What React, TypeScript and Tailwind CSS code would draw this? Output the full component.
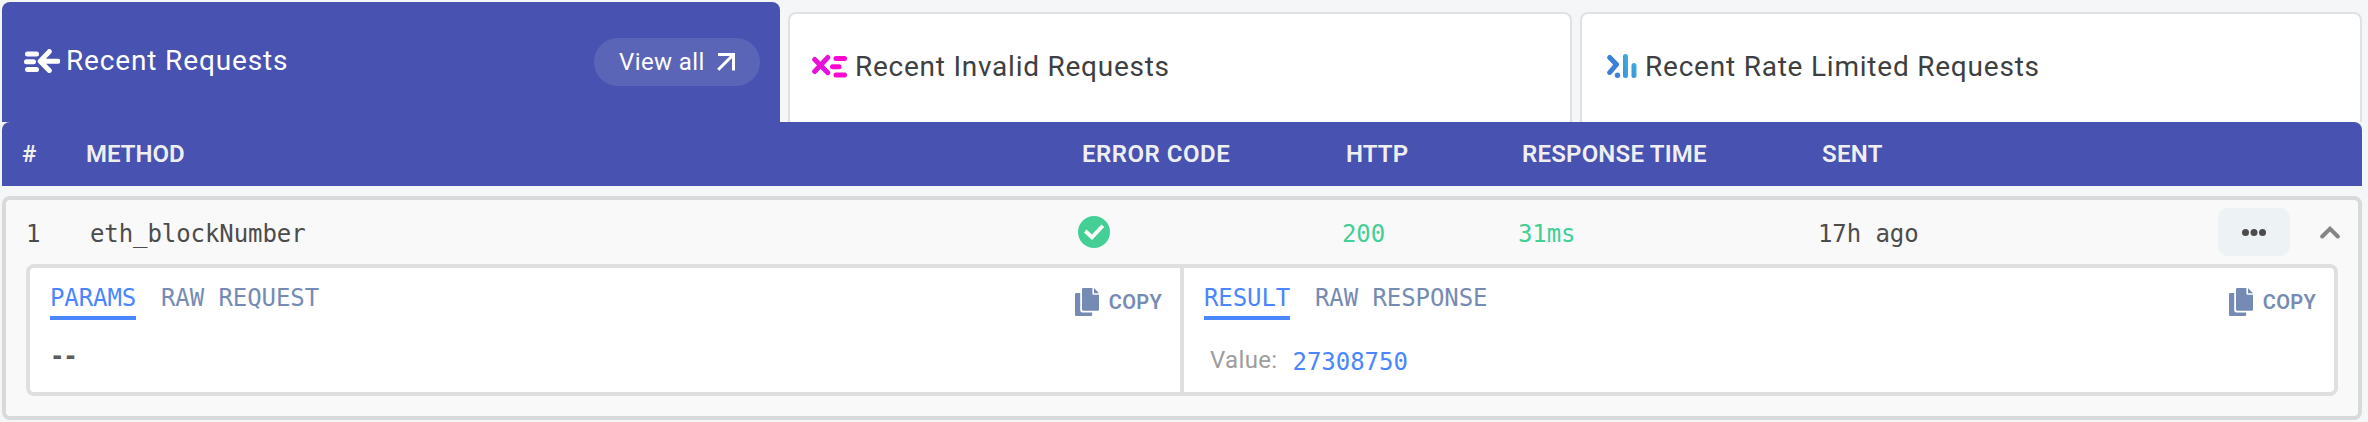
import React from "react";

function RequestsIcon() {
  return (
    <svg className="h-6 w-9 shrink-0" viewBox="0 0 36 24" fill="none" stroke="#fff" strokeWidth="5" strokeLinecap="round" strokeLinejoin="round">
      <path d="M3.5 5H12.5M2.5 12.8H9.5M3.5 20.5H12.5" />
      <path d="M25.3 2.6L16.2 12.2L25.3 21.5M18 12.2H34" />
    </svg>
  );
}

function InvalidIcon() {
  return (
    <svg className="h-6 w-9 shrink-0" viewBox="0 0 36 24" fill="none" strokeWidth="5" strokeLinecap="round">
      <path d="M2.7 5.5L15.8 18.7M15.8 3.5L2.7 17.5" stroke="#e612da" />
      <path d="M24 4.5H32.5M20.5 12.8H27M24 21H32.5" stroke="#fb08d0" />
    </svg>
  );
}

function RateIcon() {
  return (
    <svg className="h-6 w-[30px] shrink-0" viewBox="0 0 30 24" fill="none" strokeWidth="5" strokeLinecap="round" strokeLinejoin="round">
      <defs>
        <linearGradient id="rate-bars" x1="0" y1="1" x2="1" y2="0" gradientUnits="objectBoundingBox">
          <stop offset="0" stopColor="#3c8fdc" />
          <stop offset="1" stopColor="#3bb4dc" />
        </linearGradient>
      </defs>
      <path d="M2.7 3.5L9.5 10.5L2.7 18.5" stroke="#3b7fdb" />
      <circle cx="10.5" cy="21.2" r="2.7" fill="#3b82db" />
      <rect x="16" y="0" width="5" height="24" rx="2.5" fill="url(#rate-bars)" />
      <rect x="24.5" y="9" width="5" height="15" rx="2.5" fill="url(#rate-bars)" />
    </svg>
  );
}

function CopyButton() {
  return (
    <button className="mt-[5px] flex h-7 items-center gap-[10px] text-[20px] font-semibold leading-7 text-[#768bb3]">
      <svg className="h-7 w-6" viewBox="0 0 24 28" fill="currentColor">
        <path d="M1.2 5H5.2V22.2Q5.2 24.6 7.6 24.6H17.2V26.8Q17.2 28 16 28H1.2Q0 28 0 26.8V6.2Q0 5 1.2 5Z" />
        <path d="M8.2 0H17.4V5.6Q17.4 6.8 18.6 6.8H24V21.6Q24 22.8 22.8 22.8H8.2Q7 22.8 7 21.6V1.2Q7 0 8.2 0Z" />
        <path d="M19 0L24 5.2H19Z" />
      </svg>
      <span className="tracking-[0.3px]">COPY</span>
    </button>
  );
}

function Tabs({ active, other }: { active: string; other: string }) {
  return (
    <div className="flex gap-[25px] font-['DejaVu_Sans_Mono',monospace] text-[24px] leading-8 tracking-[-0.08px]">
      <span className="h-[42px] w-[86px] whitespace-nowrap border-b-4 border-[#4a86ff] pt-1 text-[#4a86ff]">{active}</span>
      <span className="pt-1 text-[#768bb3]">{other}</span>
    </div>
  );
}

export default function App() {
  return (
    <div className="h-[422px] w-[2368px] overflow-hidden bg-[#f4f6f8] pl-0.5 pr-1.5 pt-0.5 font-['Roboto',sans-serif]">
      <div className="flex h-[120px] items-end gap-2">
        <div className="flex h-[120px] w-[778px] items-start justify-between rounded-t-lg bg-[#4752b1] pl-[22px] pr-5 pt-9 text-white">
          <div className="flex h-[46px] items-center gap-[6px] text-[28px] leading-[44px] tracking-[0.85px]">
            <div><RequestsIcon /></div>
            <span>Recent Requests</span>
          </div>
          <button className="flex h-12 w-[166px] items-center rounded-full bg-[#5b65b8] pl-[25px] text-[24px]">
            <span className="w-[98px] text-left tracking-[0.4px]">View all</span>
            <svg className="h-[18px] w-[18px]" viewBox="0 0 18 18" fill="none" stroke="#fff" strokeWidth="3">
              <path d="M1 1.5H16.5V17.5M16.5 1.5L1.2 16.8" />
            </svg>
          </button>
        </div>
        <div className="flex h-[110px] w-[784px] items-start gap-[7px] rounded-t-lg border-2 border-b-0 border-[#e0e1e2] bg-white pl-[22px] pt-[31px] text-[28px] leading-[44px] tracking-[0.75px] text-[#3e3f42]">
          <div className="pt-[9px]"><InvalidIcon /></div>
          <span>Recent Invalid Requests</span>
        </div>
        <div className="flex h-[110px] w-[782px] items-start gap-2 rounded-t-lg border-2 border-b-0 border-[#e0e1e2] bg-white pl-[25px] pt-[31px] text-[28px] leading-[44px] tracking-[0.78px] text-[#3e3f42]">
          <div className="pt-[9px]"><RateIcon /></div>
          <span>Recent Rate Limited Requests</span>
        </div>
      </div>

      <div className="grid h-16 grid-cols-[64px_996px_264px_176px_300px_1fr] items-center rounded-t-lg bg-[#4752b1] pl-5 text-[24px] font-semibold text-[#efeff1]">
        <span>#</span>
        <span>METHOD</span>
        <span className="tracking-[0.5px]">ERROR CODE</span>
        <span className="tracking-[0.1px]">HTTP</span>
        <span className="tracking-[0.2px]">RESPONSE TIME</span>
        <span className="tracking-[0.3px]">SENT</span>
      </div>

      <div className="mt-[10px] h-[224px] rounded-lg border-4 border-[#d8d9d9] bg-[#f9f9f9]">
        <div className="grid h-16 grid-cols-[64px_988px_264px_176px_300px_1fr] items-center pl-5 font-['DejaVu_Sans_Mono',monospace] text-[24px] tracking-[-0.08px] text-[#4c4c4c]">
          <span className="pt-[3px]">1</span>
          <span className="pt-[3px]">eth_blockNumber</span>
          <svg className="h-8 w-8" viewBox="0 0 32 32">
            <circle cx="16" cy="16" r="16" fill="#43cf95" />
            <path d="M7.3 15L14 21.3L24.8 9.8" fill="none" stroke="#fff" strokeWidth="3.8" />
          </svg>
          <span className="pt-[3px] text-[#43cf95]">200</span>
          <span className="pt-[3px] text-[#43cf95]">31ms</span>
          <div className="flex items-center justify-between pr-[18px]">
            <span className="pt-[3px]">17h ago</span>
            <div className="flex items-center gap-[30px]">
              <button className="flex h-12 w-[72px] items-center justify-center rounded-[10px] bg-[#edf3f5]">
                <svg className="h-[7px] w-6" viewBox="0 0 24 7" fill="#4c4c4c">
                  <circle cx="3.5" cy="3.5" r="3.5" />
                  <circle cx="12" cy="3.5" r="3.5" />
                  <circle cx="20.5" cy="3.5" r="3.5" />
                </svg>
              </button>
              <svg className="h-[13px] w-5" viewBox="0 0 20 13" fill="none" stroke="#858585" strokeWidth="4" strokeLinecap="round">
                <path d="M2.2 10.5L10 2.8L17.8 10.5" />
              </svg>
            </div>
          </div>
        </div>
        <div className="mx-5 flex h-[132px] rounded-lg border-4 border-[#dfdfdf] bg-white">
          <div className="flex w-[1154px] flex-col border-r-4 border-[#dfdfdf] pl-5 pr-[18px] pt-[10px]">
            <div className="flex items-center justify-between">
              <Tabs active="PARAMS" other="RAW REQUEST" />
              <CopyButton />
            </div>
            <span className="mt-5 font-['DejaVu_Sans_Mono',monospace] text-[24px] font-bold leading-8 tracking-[-1.2px] text-[#5c5c5c]">--</span>
          </div>
          <div className="flex flex-1 flex-col pl-5 pr-[18px] pt-[10px]">
            <div className="flex items-center justify-between">
              <Tabs active="RESULT" other="RAW RESPONSE" />
              <CopyButton />
            </div>
            <div className="mt-6 flex items-start gap-[15px] pl-[6px] text-[24px] leading-8 text-[#9d9d9d]">
              <span className="tracking-[0.35px]">Value:</span>
              <span className="pt-0.5 font-['DejaVu_Sans_Mono',monospace] tracking-[-0.03px] text-[#4a86ff]">27308750</span>
            </div>
          </div>
        </div>
      </div>
    </div>
  );
}
